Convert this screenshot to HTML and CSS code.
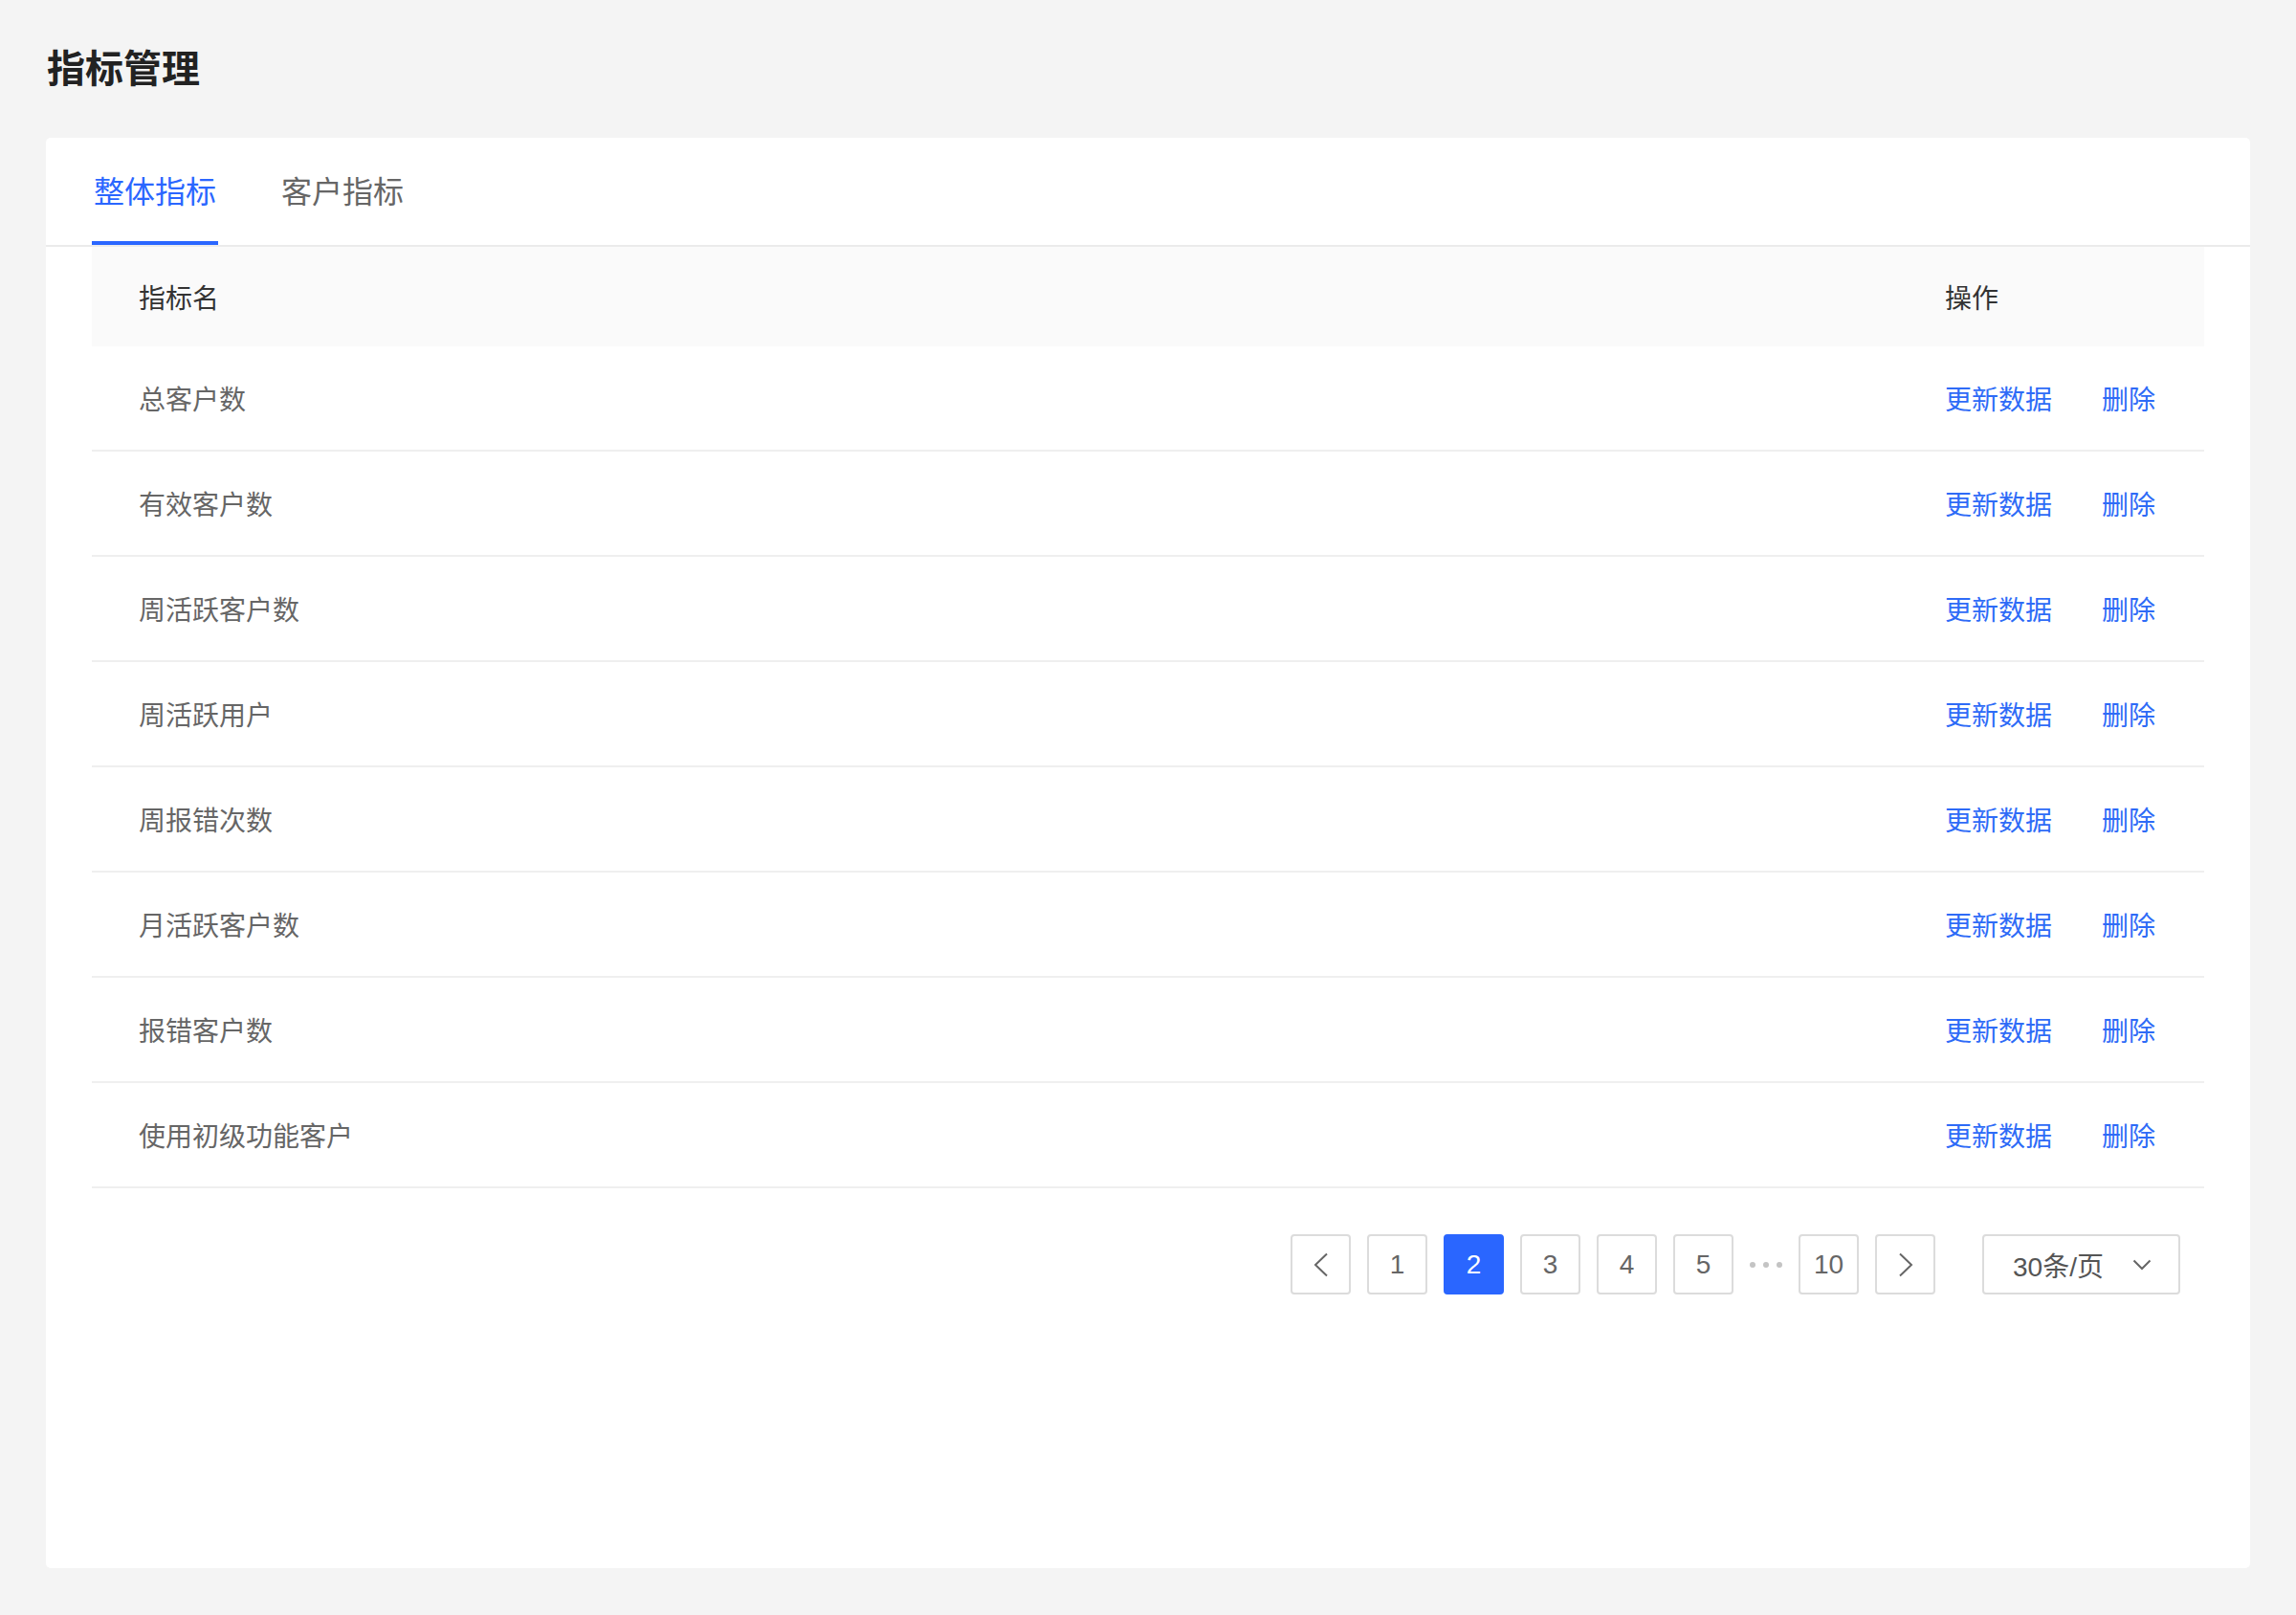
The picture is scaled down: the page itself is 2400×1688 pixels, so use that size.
FILE: index.html
```html
<!DOCTYPE html>
<html lang="zh-CN">
<head>
<meta charset="utf-8">
<title>指标管理</title>
<link rel="stylesheet" href="styles.css">
</head>
<body>
<div class="page">
  <h1 class="page-title">指标管理</h1>
  <div class="card">
    <div class="tabs">
      <div class="tab active">整体指标</div>
      <div class="tab">客户指标</div>
    </div>
    <div class="table">
      <div class="thead">
        <div class="col-name">指标名</div>
        <div class="col-op">操作</div>
      </div>
      <div class="row"><div class="col-name">总客户数</div><div class="col-op"><a class="link">更新数据</a><a class="link">删除</a></div></div>
      <div class="row"><div class="col-name">有效客户数</div><div class="col-op"><a class="link">更新数据</a><a class="link">删除</a></div></div>
      <div class="row"><div class="col-name">周活跃客户数</div><div class="col-op"><a class="link">更新数据</a><a class="link">删除</a></div></div>
      <div class="row"><div class="col-name">周活跃用户</div><div class="col-op"><a class="link">更新数据</a><a class="link">删除</a></div></div>
      <div class="row"><div class="col-name">周报错次数</div><div class="col-op"><a class="link">更新数据</a><a class="link">删除</a></div></div>
      <div class="row"><div class="col-name">月活跃客户数</div><div class="col-op"><a class="link">更新数据</a><a class="link">删除</a></div></div>
      <div class="row"><div class="col-name">报错客户数</div><div class="col-op"><a class="link">更新数据</a><a class="link">删除</a></div></div>
      <div class="row"><div class="col-name">使用初级功能客户</div><div class="col-op"><a class="link">更新数据</a><a class="link">删除</a></div></div>
    </div>
    <div class="pagination">
      <div class="pg-btn"><svg width="20" height="26" viewBox="0 0 20 26"><path d="M16 1.5 L4 13 L16 24.5" fill="none" stroke="#666" stroke-width="2"/></svg></div>
      <div class="pg-btn">1</div>
      <div class="pg-btn current">2</div>
      <div class="pg-btn">3</div>
      <div class="pg-btn">4</div>
      <div class="pg-btn">5</div>
      <div class="pg-ellipsis"><span></span><span></span><span></span></div>
      <div class="pg-btn">10</div>
      <div class="pg-btn"><svg width="20" height="26" viewBox="0 0 20 26"><path d="M4 1.5 L16 13 L4 24.5" fill="none" stroke="#666" stroke-width="2"/></svg></div>
      <div class="pg-size">
        <span>30条/页</span>
        <svg width="20" height="12" viewBox="0 0 20 12"><path d="M1.5 1.5 L10 10 L18.5 1.5" fill="none" stroke="#666" stroke-width="2"/></svg>
      </div>
    </div>
  </div>
</div>
</body>
</html>
```
FILE: styles.css
```css
* { box-sizing: border-box; }
html, body {
  margin: 0;
  padding: 0;
  background: #f4f4f4;
  font-family: "Liberation Sans", "Noto Sans CJK SC", sans-serif;
}
.page {
  width: 2400px;
  height: 1688px;
  padding: 0 48px;
  display: flex;
  flex-direction: column;
}
.page-title {
  margin: 44px 0 44px 1px;
  font-size: 40px;
  line-height: 56px;
  font-weight: 600;
  color: #222;
}
.card {
  height: 1495px;
  background: #fff;
  border-radius: 5px;
  display: flex;
  flex-direction: column;
}
.tabs {
  display: flex;
  gap: 64px;
  padding: 0 48px;
  height: 114px;
  border-bottom: 2px solid #ebebeb;
}
.tab {
  height: 112px;
  padding: 5px 2px 0;
  font-size: 32px;
  line-height: 40px;
  color: #666;
  border-bottom: 4px solid transparent;
  display: flex;
  align-items: center;
}
.tab.active {
  color: #2a66ff;
  border-bottom-color: #2a66ff;
}
.table {
  margin: 0 48px;
  display: flex;
  flex-direction: column;
}
.thead, .row {
  display: flex;
  align-items: center;
  padding-top: 5px;
}
.thead {
  height: 104px;
  background: #fafafa;
  font-size: 28px;
  color: #333;
}
.row {
  height: 110px;
  border-bottom: 2px solid #efefef;
  font-size: 28px;
  color: #666;
}
.col-name {
  flex: 1;
  padding-left: 49px;
  line-height: 40px;
}
.col-op {
  width: 319px;
  padding-left: 48px;
  line-height: 40px;
  display: flex;
  gap: 52px;
}
.link {
  color: #2e6bf7;
  cursor: pointer;
}
.pagination {
  display: flex;
  justify-content: flex-end;
  align-items: center;
  gap: 17px;
  margin: 48px 73px 0 0;
}
.pg-btn {
  width: 63px;
  height: 63px;
  border: 2px solid #dcdcdc;
  border-radius: 4px;
  display: flex;
  align-items: center;
  justify-content: center;
  font-size: 28px;
  color: #666;
  background: #fff;
}
.pg-btn.current {
  background: #2a66ff;
  border-color: #2a66ff;
  color: #fff;
}
.pg-ellipsis {
  width: 34px;
  display: flex;
  justify-content: space-between;
}
.pg-ellipsis span {
  width: 6px;
  height: 6px;
  border-radius: 50%;
  background: #c4c4c4;
}
.pg-size {
  margin-left: 32px;
  width: 207px;
  height: 63px;
  border: 2px solid #dcdcdc;
  border-radius: 4px;
  display: flex;
  align-items: center;
  justify-content: space-between;
  padding: 0 28px 0 30px;
  font-size: 28px;
  color: #555;
}
```
